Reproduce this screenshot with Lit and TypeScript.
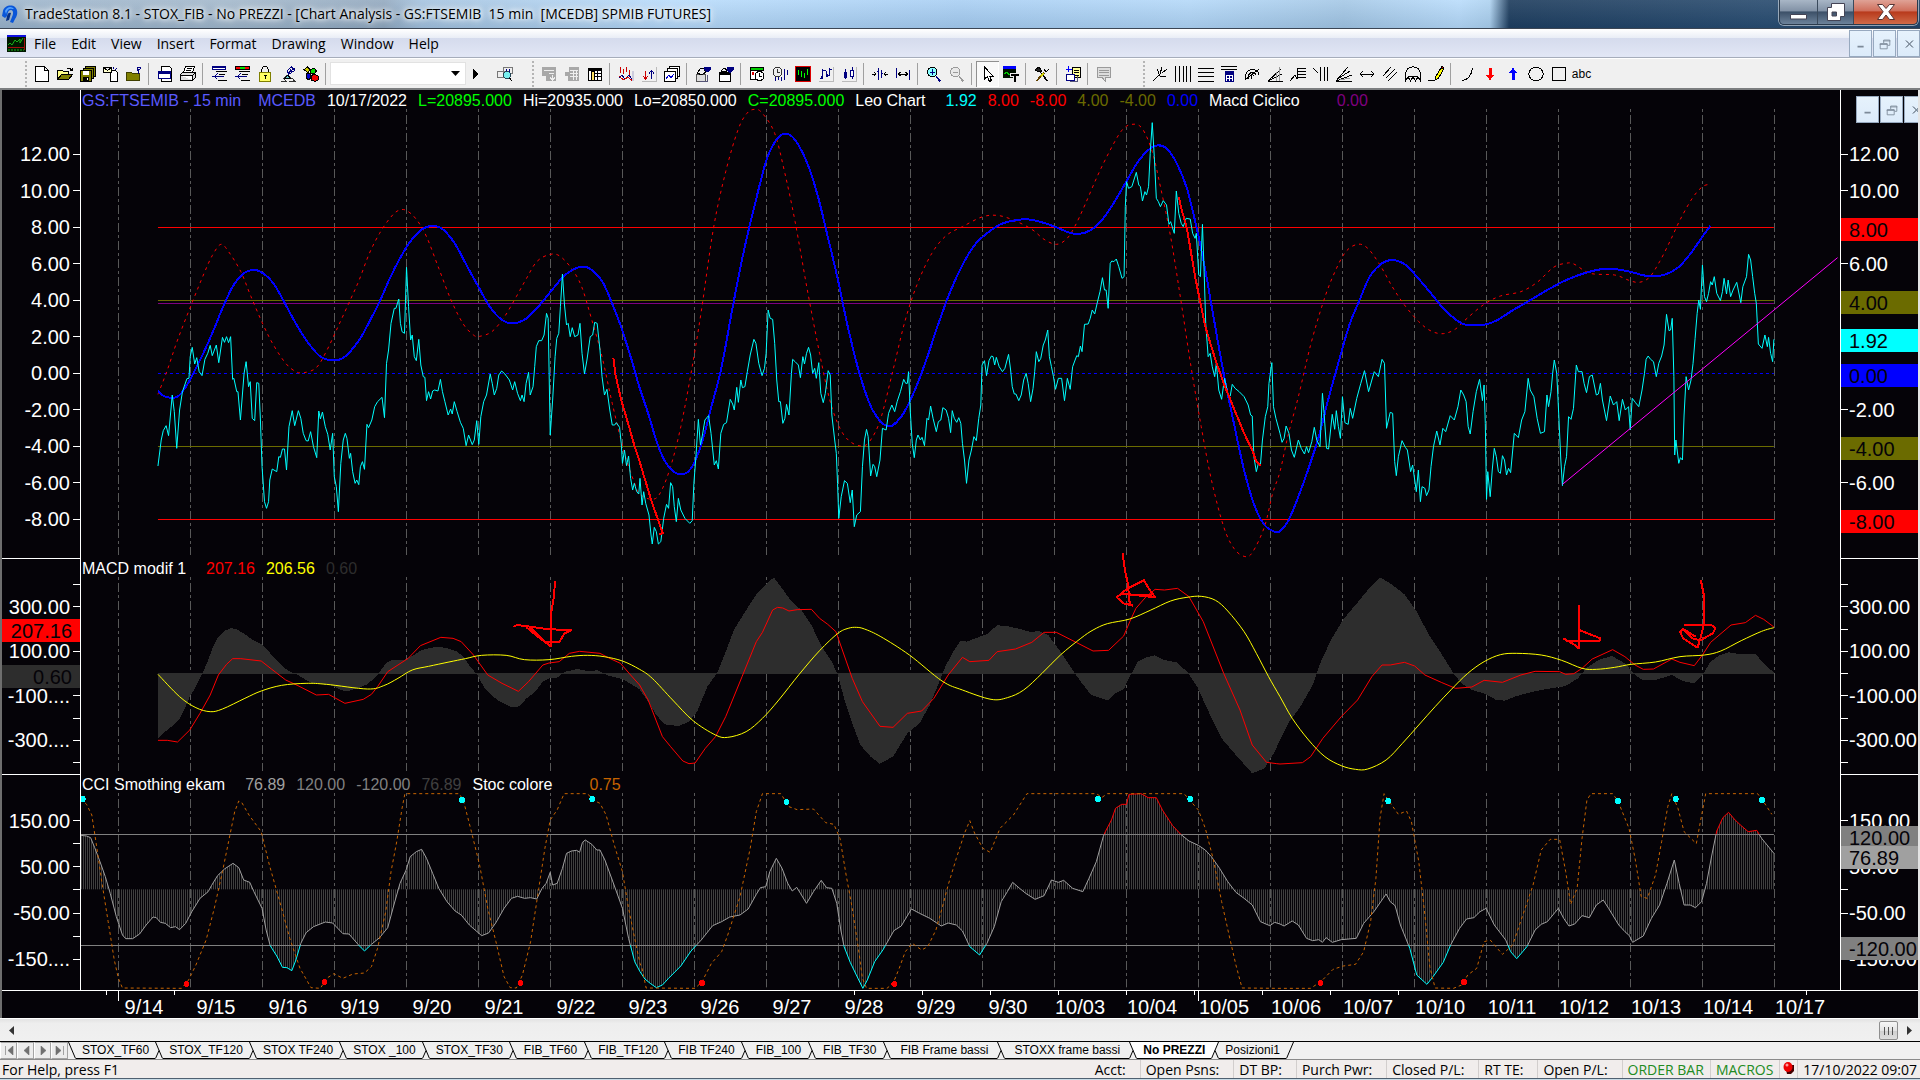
import { LitElement, html, svg, css } from "lit";
import { customElement, property } from "lit/decorators.js";
import { styleMap } from "lit/directives/style-map.js";

type Pt = [number, number];
type Stroke = [fill: string, stroke: string, d: string];

/* Chart space: 2.45 units per screen pixel across, 3 down, in three columns of 1568 units. */
const COLUMN = 1568;
const parse = (columns: string[]): Pt[] =>
  columns.flatMap((text, i) =>
    text.trim().split(/\s+/).map((pair) => {
      const [x, y] = pair.split(",").map(Number);
      return [x + i * COLUMN, y] as Pt;
    })
  );

const poly = (p: Pt[]) => "M" + p.map(([x, y]) => `${x} ${y}`).join("L");

const smooth = (p: Pt[]) => {
  let d = `M${p[0][0]} ${p[0][1]}`;
  for (let i = 0; i < p.length - 1; i++) {
    const a = p[Math.max(i - 1, 0)], b = p[i], c = p[i + 1], e = p[Math.min(i + 2, p.length - 1)];
    d += `C${b[0] + (c[0] - a[0]) / 6} ${b[1] + (c[1] - a[1]) / 6} ${c[0] - (e[0] - b[0]) / 6} ${c[1] - (e[1] - b[1]) / 6} ${c[0]} ${c[1]}`;
  }
  return d;
};

const bars = (p: Pt[], zero: number, from: number, step: number) => {
  let d = "";
  let k = 0;
  for (let x = from; x <= p[p.length - 1][0]; x += step) {
    while (k < p.length - 2 && p[k + 1][0] < x) k++;
    const [a, b] = [p[k], p[k + 1]];
    const y = a[1] + ((b[1] - a[1]) * (x - a[0])) / (b[0] - a[0]);
    d += `M${x.toFixed(2)} ${zero}V${y.toFixed(1)}`;
  }
  return d;
};

const cycle = parse([
  `387,903 405,920 435,920 458,885 480,835 500,785 525,715 545,655 570,590 595,552 622,540 645,550 670,580 695,633 720,690 750,750 785,800 818,811 845,800 880,750 905,695 930,635 955,565 980,505 1005,455 1035,417 1060,408 1085,418 1115,462 1145,530 1172,590 1200,650 1230,690 1258,700 1290,685 1320,648 1349,605 1380,560 1405,538 1430,530 1450,540 1475,573 1498,635 1520,705 1545,800 1567,893`,
  `20,970 45,1070 70,1130 100,1153 125,1135 150,1065 175,950 200,830 228,645 255,480 280,350 310,210 335,148 357,131 380,150 410,220 435,315 460,440 485,570 510,715 540,860 570,960 607,1009 640,980 670,910 700,815 730,705 760,605 790,525 820,465 850,430 885,402 920,391 950,388 985,397 1020,412 1050,427 1075,432 1105,420 1130,393 1160,340 1190,278 1220,215 1250,175 1270,166 1290,175 1315,220 1340,295 1365,420 1385,540 1405,680 1430,850 1455,1000 1480,1140 1505,1245 1530,1305 1555,1325`,
  `0,1323 20,1293 45,1220 70,1135 95,1040 120,920 145,810 170,705 195,630 220,560 250,520 278,510 310,527 340,567 370,610 400,655 430,688 455,704 500,704 530,692 570,661 610,633 655,600 700,571 750,548 800,536 850,543 900,558 940,555 975,533 1005,492 1035,440 1054,408`,
]);

const lead = parse([
  `387,913 410,840 435,750 470,640 500,550 520,497 541,463 560,485 590,545 615,620 645,705 670,765 700,820 725,845 745,848 775,833 800,783 830,705 860,625 880,570 905,490 930,430 955,385 975,362 995,361 1020,388 1045,440 1075,535 1105,630 1135,702 1160,735 1175,739 1205,725 1235,682 1265,620 1290,565 1315,515 1345,494 1370,497 1400,535 1425,590 1450,690 1475,800 1500,940 1530,1090 1555,1180`,
  `0,1213 30,1228 50,1208 75,1130 100,1010 125,850 150,665 180,415 210,245 240,120 262,70 282,58 300,70 330,130 355,250 380,395 410,600 440,790 465,930 490,1015 515,1055 545,1068 565,1050 590,985 620,840 650,690 680,580 715,490 750,437 790,410 840,380 880,377 920,393 960,418 990,448 1020,463 1045,447 1065,410 1090,345 1120,260 1150,185 1180,122 1205,103 1230,115 1255,185 1275,290 1300,440 1325,630 1350,830 1375,1010 1400,1170 1430,1310 1455,1375 1480,1399 1500,1388 1530,1310 1550,1210`,
  `0,1145 20,1035 45,920 75,765 105,640 130,558 160,487 190,463 215,475 245,525 275,590 305,645 340,695 370,723 400,731 430,717 460,683 500,643 540,618 590,605 630,577 670,532 700,520 720,522 760,550 820,555 855,571 880,577 905,562 930,515 955,455 980,390 1010,325 1035,290 1054,283`,
]);

const price = parse([
  `387,1128 395,1050 400,1022 407,1007 413,1037 422,915 427,965 433,1075 440,960 447,905 458,866 463,865 466,800 471,772 477,822 482,803 488,845 495,857 502,808 509,790 515,766 520,797 530,765 536,818 545,742 550,757 555,740 560,758 565,740 570,868 573,865 580,905 583,905 589,990 598,850 603,815 609,890 613,875 618,985 624,992 629,878 634,880 638,990 642,1130 648,1235 653,1255 658,1235 661,1170 667,1137 678,1145 683,1100 687,1102 692,1077 697,1077 702,1140 708,1010 716,962 722,1007 731,962 737,985 743,1030 750,1052 755,1053 761,1025 768,1070 776,1103 781,963 785,987 790,966 797,1010 803,1033 809,1080 815,1030 819,1160 824,1190 829,1265 835,1120 841,1050 846,1030 850,1045 856,1105 859,1090 864,1145 870,1180 874,1170 879,1184 883,1130 888,1115 893,1138 899,1003 903,1013 911,990 918,950 925,935 936,922 942,983 947,820 952,780 958,700 966,655 970,655 977,627 981,700 985,725 991,730 996,532 1001,650 1006,750 1010,735 1015,800 1020,812 1026,748 1031,825 1037,860 1041,862 1045,932 1050,905 1055,927 1060,903 1065,900 1073,903 1079,868 1084,905 1090,935 1098,975 1104,957 1108,972 1113,935 1120,965 1128,997 1135,1015 1142,1067 1148,1035 1157,1064 1162,1050 1168,992 1173,1063 1178,980 1185,935 1192,915 1201,852 1206,880 1211,915 1217,895 1222,855 1229,843 1237,852 1248,870 1256,900 1261,875 1268,910 1275,932 1279,915 1284,935 1289,880 1295,847 1299,915 1306,890 1310,830 1314,770 1320,752 1327,752 1333,735 1339,670 1343,685 1348,1035 1354,930 1360,800 1364,745 1369,730 1373,650 1378,552 1383,645 1388,705 1392,700 1397,740 1402,713 1408,740 1416,735 1421,700 1426,790 1432,852 1438,810 1446,740 1452,735 1457,697 1463,700 1470,780 1475,860 1481,915 1487,898 1494,960 1500,1005 1506,1005 1510,998 1518,1012 1522,1060 1525,1120 1530,1080 1535,1127 1540,1098 1545,1165 1550,1200 1554,1180 1560,1205 1565,1212`,
  `0,1165 5,1245 9,1205 14,1240 22,1275 27,1335 30,1362 35,1312 40,1325 45,1362 51,1355 58,1285 65,1243 70,1255 75,1178 80,1190 84,1250 89,1295 94,1225 100,1260 110,1285 122,1300 128,1292 132,1180 137,1100 143,988 148,1065 153,1035 159,990 168,977 174,1030 182,1125 187,1112 192,1137 198,1030 205,1003 212,998 221,928 227,942 231,960 237,892 241,937 247,870 251,893 257,890 263,845 270,795 279,748 284,760 291,820 299,857 305,835 309,790 314,660 319,685 325,688 330,760 335,870 340,935 344,935 350,1000 355,985 359,943 365,975 371,850 374,808 380,815 388,825 393,863 399,800 403,822 408,790 413,772 418,795 423,850 428,835 432,865 438,818 443,910 449,938 454,910 461,842 466,855 470,975 477,1050 481,1090 484,1180 487,1285 493,1220 501,1172 508,1180 515,1238 520,1200 525,1310 531,1275 540,1265 545,1130 550,1050 555,1018 559,1040 565,1158 571,1123 575,1130 580,1160 588,1110 594,1015 603,1020 609,970 617,945 624,965 630,935 638,905 646,868 651,880 655,880 658,845 662,960 667,1060 672,1103 677,1050 681,1035 687,1050 691,1042 697,1067 703,985 707,990 712,948 718,985 726,1025 731,995 737,990 742,953 750,960 756,985 761,1028 765,962 770,985 776,997 781,983 786,1000 790,1060 795,1110 800,1180 806,1110 812,1080 818,1040 824,1052 830,985 835,945 838,825 844,812 849,857 855,812 861,798 865,800 869,825 873,802 880,830 888,845 894,835 903,793 908,840 912,890 917,912 921,912 928,932 934,915 940,870 946,850 951,880 957,935 963,895 967,845 971,785 977,815 982,805 988,765 993,750 999,720 1003,800 1008,830 1013,860 1018,898 1025,865 1033,865 1040,932 1047,865 1054,898 1060,830 1070,797 1074,800 1079,768 1083,785 1089,703 1098,702 1103,685 1108,660 1114,672 1120,640 1127,605 1133,563 1138,600 1142,600 1147,655 1152,520 1156,513 1161,515 1167,507 1173,530 1181,565 1186,560 1189,350 1192,275 1197,295 1205,290 1216,247 1222,285 1226,290 1231,333 1237,305 1241,315 1246,290 1250,190 1255,98 1260,200 1265,325 1270,335 1275,350 1282,332 1290,345 1296,403 1300,395 1309,430 1314,303 1320,370 1326,400 1331,410 1338,385 1348,387 1354,430 1360,445 1363,430 1369,555 1373,560 1378,403 1382,540 1386,700 1392,800 1397,790 1402,830 1408,860 1412,820 1418,900 1425,928 1432,865 1442,920 1446,918 1451,883 1458,895 1468,905 1480,920 1490,945 1496,975 1500,978 1504,1100 1510,1145 1515,1120 1520,1125 1525,1050 1532,980 1538,950 1541,880 1548,818 1552,950 1558,985`,
  `0,1030 5,1057 10,1045 15,1008 22,1030 28,1080 35,1102 45,1050 52,1075 60,1092 65,1070 70,1088 78,1055 84,1012 90,1050 98,1070 104,910 108,970 114,1075 119,1077 128,973 134,1018 138,962 143,1010 148,1045 153,920 159,998 167,1003 172,955 178,985 188,925 198,880 207,842 217,905 225,870 231,845 241,860 250,808 256,820 261,1015 270,967 276,970 281,1115 285,1157 290,1100 299,1052 307,1072 312,1080 320,1145 325,1125 334,1205 339,1140 344,1235 348,1190 355,1195 359,1217 365,1200 370,1130 376,1070 384,1023 392,1065 399,1015 406,1025 417,977 427,990 436,950 443,900 450,915 456,935 461,1010 466,1032 473,965 481,905 489,868 496,932 500,885 503,1000 506,1228 509,1145 515,1220 520,1140 525,1075 530,1100 535,1145 540,1150 545,1097 550,1110 555,1155 560,1135 565,1148 574,1030 584,1043 592,990 600,965 608,865 613,900 622,920 630,985 638,1030 648,1025 654,915 658,950 664,905 668,850 672,810 678,850 683,975 688,1110 692,1187 697,1130 702,1100 707,980 713,988 719,955 726,825 731,845 740,845 745,880 751,908 758,860 765,855 770,885 775,915 780,912 785,880 790,930 800,992 809,918 817,945 825,935 831,992 839,928 846,960 854,950 858,1020 863,925 871,938 879,950 887,900 893,850 897,808 902,798 908,808 915,815 922,860 928,820 935,798 941,765 947,673 953,722 957,720 961,685 965,860 967,1095 970,1050 977,1120 981,1103 986,1110 990,975 995,860 1001,900 1007,870 1012,820 1017,745 1022,670 1026,630 1030,658 1035,525 1040,620 1045,635 1050,610 1055,575 1059,585 1064,560 1070,610 1079,632 1084,605 1088,565 1094,612 1098,570 1104,620 1110,600 1119,577 1129,638 1134,590 1143,560 1148,493 1153,510 1158,560 1163,610 1167,640 1172,762 1181,775 1188,735 1194,770 1197,742 1202,790 1207,815 1210,748`,
]);

const macdHist = parse([
  `387,552 400,535 420,515 437,497 450,468 465,425 480,395 495,358 510,315 522,275 535,245 550,228 565,219 580,223 600,238 620,255 642,268 660,292 680,318 700,342 715,352 730,360 760,382 790,388 815,392 835,405 850,409 880,398 900,388 918,368 930,352 945,325 960,316 990,315 1010,303 1030,287 1055,278 1080,276 1100,281 1120,290 1135,305 1150,332 1170,360 1185,395 1205,422 1225,440 1255,457 1272,454 1290,430 1310,412 1330,380 1345,370 1365,368 1385,350 1415,342 1440,348 1465,346 1490,362 1525,372 1567,403`,
  `20,440 40,480 60,508 95,513 120,500 140,470 165,395 190,352 210,290 230,225 255,175 285,118 305,92 328,67 345,95 370,138 395,165 420,210 445,275 470,320 485,360 500,430 520,505 540,570 565,605 587,626 620,605 655,535 685,505 710,450 730,390 750,330 770,285 785,257 800,260 850,237 875,211 900,213 940,225 960,232 975,227 1000,240 1030,290 1060,345 1080,380 1105,420 1147,437 1165,415 1185,403 1200,365 1220,320 1240,307 1262,301 1285,315 1315,322 1340,350 1365,395 1395,475 1425,550 1460,600 1500,655 1530,640 1555,590`,
  `0,555 20,505 50,455 80,390 100,320 125,255 155,193 185,150 215,105 245,67 270,85 305,118 335,170 365,240 400,305 425,355 445,385 470,405 500,415 530,435 550,437 580,423 620,410 650,403 700,393 730,370 750,340 780,315 813,303 845,325 870,360 890,376 920,375 960,360 985,377 1015,386 1035,360 1055,320 1075,302 1100,292 1130,298 1165,297 1185,325 1210,353`,
]);

const macdFast = parse([
  `387,556 410,556 435,561 465,525 490,475 515,420 535,360 555,328 570,311 590,311 640,318 665,342 700,375 730,392 775,420 805,418 845,445 890,433 910,418 925,395 950,350 975,330 1000,310 1030,272 1080,247 1110,250 1130,260 1160,300 1195,360 1230,385 1270,409 1295,380 1330,330 1345,324 1370,320 1395,295 1420,289 1470,295 1490,308 1520,325 1545,360 1567,390`,
  `20,435 55,545 75,575 105,618 120,626 135,624 160,580 185,545 210,485 250,365 285,260 300,232 325,165 337,157 350,159 365,168 385,164 420,163 440,190 460,208 480,230 500,300 520,370 545,440 588,514 620,517 655,475 690,468 720,430 755,360 790,307 808,320 855,316 875,290 920,282 960,262 990,232 1020,232 1070,263 1110,288 1148,286 1185,243 1200,200 1215,160 1240,125 1262,103 1285,105 1317,100 1345,125 1380,200 1430,355 1470,465 1500,570 1535,622 1560,626`,
  `0,627 55,623 75,605 105,550 150,485 190,435 225,365 250,330 270,330 305,322 330,333 355,360 395,382 430,400 470,396 500,376 545,382 590,360 625,349 685,350 700,358 720,356 740,340 765,312 815,284 845,305 870,330 890,343 915,342 960,312 980,322 1015,332 1035,300 1055,262 1105,210 1140,203 1165,181 1185,193 1210,216`,
]);

const macdSlow = parse([
  `387,358 440,425 480,458 515,470 545,462 600,430 640,408 690,391 750,385 800,388 900,402 940,392 975,370 1010,345 1050,334 1100,321 1140,311 1180,301 1240,301 1285,314 1345,314 1400,304 1440,301 1480,305 1525,318 1567,343`,
  `30,370 80,435 130,497 185,540 215,547 260,530 300,490 340,435 390,358 440,287 485,235 510,220 530,217 550,222 590,245 660,300 740,378 790,405 860,433 900,428 940,405 985,355 1030,300 1080,250 1110,225 1145,206 1200,192 1250,166 1300,138 1340,127 1375,124 1410,136 1440,168 1480,230 1510,295 1540,365`,
  `0,425 30,490 70,555 110,605 150,632 185,643 215,642 260,615 300,565 340,510 380,455 420,403 460,355 500,320 540,299 580,295 640,300 690,316 740,340 775,343 820,337 860,328 920,321 980,305 1040,300 1080,288 1130,257 1180,229 1210,218`,
]);

const cci = parse([
  `198,841 212,843 222,848 232,878 245,920 258,965 270,1015 285,1085 300,1140 308,1151 325,1151 342,1137 358,1110 375,1086 383,1088 393,1102 405,1105 418,1118 430,1115 440,1124 455,1105 470,1070 490,1030 510,1010 518,992 533,962 550,942 571,925 585,938 597,975 612,982 622,1010 642,1060 652,1125 662,1172 678,1203 692,1237 703,1238 715,1247 725,1215 737,1165 750,1133 768,1115 797,1101 815,1104 840,1136 855,1137 880,1172 893,1188 910,1168 930,1148 950,1118 965,1050 980,985 995,945 1005,905 1020,890 1033,883 1045,910 1060,955 1075,1000 1095,1040 1115,1068 1130,1080 1150,1110 1180,1142 1197,1134 1215,1103 1235,1060 1253,1030 1268,1024 1285,1030 1300,1028 1315,1032 1328,1000 1338,985 1348,952 1354,990 1365,985 1378,940 1388,895 1400,888 1413,886 1420,892 1427,862 1434,855 1450,868 1462,885 1470,885 1482,915 1500,975 1525,1060 1540,1150 1555,1220`,
  `0,1250 12,1272 25,1285 40,1298 55,1290 70,1270 100,1233 125,1188 150,1155 178,1112 200,1100 220,1086 245,1080 265,1062 285,1018 295,998 308,995 318,950 334,910 348,940 362,985 373,1008 384,997 393,1015 408,1045 425,1010 444,976 457,998 470,1000 482,1045 492,1125 500,1175 515,1222 530,1260 546,1300 557,1275 575,1220 595,1185 622,1127 640,1113 665,1062 685,1075 710,1090 738,1113 755,1104 775,1110 790,1128 808,1175 832,1200 850,1165 868,1115 885,1040 900,1010 913,982 930,1000 945,1015 968,1033 990,1022 1008,975 1025,982 1038,976 1060,1000 1085,1010 1100,970 1118,920 1135,845 1140,830 1155,795 1165,760 1180,748 1192,748 1198,718 1228,716 1245,728 1265,728 1280,765 1305,812 1325,838 1345,858 1368,871 1385,885 1400,905 1420,940 1440,980 1460,1012 1480,1030 1500,1050 1520,1100 1543,1112 1555,1102`,
  `0,1107 10,1113 30,1098 45,1110 65,1150 80,1157 95,1154 104,1162 113,1148 128,1162 150,1154 187,1150 205,1105 230,1070 260,1017 270,1040 282,1052 295,1110 318,1180 335,1260 360,1288 375,1265 400,1222 418,1170 440,1120 457,1092 475,1088 490,1070 505,1060 525,1110 553,1155 565,1190 580,1211 605,1175 625,1125 640,1108 655,1100 682,1060 695,1090 708,1113 722,1107 740,1082 758,1088 775,1050 792,1035 805,1060 830,1110 845,1130 856,1142 864,1162 890,1143 910,1090 930,1050 948,985 966,915 978,985 990,1050 1005,1050 1018,1058 1033,1040 1045,985 1058,900 1070,828 1085,788 1099,772 1115,795 1130,812 1147,830 1168,826 1180,850 1210,895`,
]);

const stoch = parse([
  `198,732 212,748 225,780 235,860 250,985 265,1100 280,1215 290,1270 300,1299 445,1300 462,1275 480,1230 505,1155 525,1060 545,950 560,860 575,770 585,738 592,742 610,780 640,830 660,930 690,1060 710,1150 735,1240 762,1298 785,1300 800,1270 818,1256 840,1270 865,1257 893,1254 910,1235 925,1180 945,1070 958,950 972,860 985,760 992,716 1125,716 1135,735 1155,830 1175,930 1195,1060 1215,1160 1235,1265 1250,1298 1265,1299 1280,1260 1300,1160 1320,1000 1335,880 1348,795 1365,765 1382,716 1440,716 1452,735 1470,745 1485,780 1505,870 1525,950 1540,1060 1560,1180`,
  `0,1225 5,1240 15,1299 135,1300 152,1280 175,1225 200,1190 215,1140 245,1025 270,880 285,770 300,716 345,716 365,755 385,764 425,762 455,803 475,808 490,850 505,960 520,1060 535,1180 545,1270 555,1300 605,1300 620,1285 635,1240 650,1190 667,1165 690,1185 705,1175 725,1125 740,1060 755,990 775,910 795,835 808,797 820,835 840,880 858,892 882,820 915,780 948,716 1118,716 1132,727 1145,716 1333,716 1350,740 1368,765 1385,820 1405,915 1425,1040 1445,1150 1460,1230 1475,1299 1560,1300`,
  `0,1300 75,1300 100,1280 130,1243 155,1233 185,1228 205,1190 222,1100 235,970 245,790 255,716 265,735 290,778 310,768 322,800 340,920 355,1080 367,1235 380,1299 425,1300 445,1290 460,1260 482,1240 500,1160 515,1155 545,1198 570,1170 595,1080 620,990 640,885 662,853 685,853 700,950 712,1048 728,1000 740,850 752,735 762,716 815,716 828,738 855,820 870,910 885,1025 900,1030 920,960 935,860 950,755 960,716 975,760 990,830 1020,866 1030,800 1043,716 1170,716 1182,735 1205,778`,
]);

const highDots: Pt[] = [[203, 732], [1132, 735], [1451, 732], [1927, 741], [2690, 732], [2916, 732], [3401, 738], [3964, 738], [4106, 732], [4317, 735]];
const lowDots: Pt[] = [[457, 1287], [795, 1281], [1275, 1284], [1720, 1284], [2191, 1287], [3235, 1284], [3587, 1281]];

const PLOT_X = 198.45;
const PLOT_W = 4309.55;
const DAY_X = 290.33;
const DAY_W = 176.4;
const DATES = ["9/14", "9/15", "9/16", "9/19", "9/20", "9/21", "9/22", "9/23", "9/26", "9/27", "9/28", "9/29", "9/30", "10/03", "10/04", "10/05", "10/06", "10/07", "10/10", "10/11", "10/12", "10/13", "10/14", "10/17"];

const dayLines = (y0: number, y1: number) =>
  svg`<path class="day" d=${DATES.map((_, i) => `M${(DAY_X + i * DAY_W).toFixed(2)} ${y0}V${y1}`).join("")}></path>`;

const line = (color: string, d: string, width = 1, dash = "") =>
  svg`<path class="ln" stroke=${color} stroke-width=${width} stroke-dasharray=${dash || "none"} d=${d}></path>`;

const level = (color: string, y: number, x0 = 387, dash = "") => line(color, `M${x0} ${y}H4346`, 1, dash);

const mainPlot = svg`
  ${dayLines(57, 1395)}
  ${level("#ff0000", 412.5)}${level("#ff0000", 1288.5)}
  ${level("#6b6b00", 631.5)}${level("#6b6b00", 1069.5)}${level("#800080", 640.5)}
  ${level("#0000ff", 850.5, 387, "3 3")}
  ${line("#ff0000", smooth(lead), 1, "3 4")}
  ${line("#0000ff", smooth(cycle), 2)}
  ${line("#00ffff", poly(price))}
  ${line("#ff00ff", "M3828 1183L4502 503")}
  ${line("#ff0000", "M1503 805L1508 855L1522 930L1540 1005L1555 1070L1568 1118L1578 1160L1598 1240L1624 1330L1614 1332", 2)}
  ${line("#ff0000", "M2888 320L2894 355L2908 415L2928 560L2953 710L2978 810L2998 880L3018 940L3048 1030L3068 1080L3078 1115L3089 1128", 2)}
  ${line("#ff0000", "M2751 1390V1404", 2)}`;

const macdPlot = svg`
  ${dayLines(66, 648)}
  <path fill="#2d2d2d" d="${poly(macdHist)}V356H387Z"></path>
  ${line("#2d2d2d", "M387 355.5H4346")}
  ${line("#ff0000", poly(macdFast))}
  ${line("#ffff00", smooth(macdSlow))}
  ${line("#ff0000", "M1360 78L1357 125L1350 175V275M1258 215L1268 210L1340 222L1400 226L1383 235L1370 262H1335M1290 217L1318 245L1352 276M1300 217L1335 262", 2)}
  ${line("#ff0000", "M2751 0L2756 45L2763 85L2766 120L2768 150M2776 152L2753 145L2736 127L2763 100L2803 76L2813 98L2830 127L2753 116M2746 118L2823 120", 2)}
  ${line("#ff0000", "M3868 150V280L3856 268L3830 250M3871 226L3896 238L3921 250L3919 258H3836", 2)}
  ${line("#ff0000", "M4167 75L4174 118V210L4166 250L4159 278M4126 210L4194 211L4203 220L4196 235L4166 256L4146 250L4124 222L4116 230L4124 250L4158 278M4124 222L4154 245", 2)}`;

const cciPath = poly(cci);
const cciPlot = svg`
  <defs>
    <clipPath id="over"><rect x="0" y="657" width="4704" height="181"></rect></clipPath>
    <clipPath id="mid"><rect x="0" y="838" width="4704" height="333"></rect></clipPath>
    <clipPath id="under"><rect x="0" y="1171" width="4704" height="140"></rect></clipPath>
  </defs>
  ${dayLines(714, 1297)}
  ${line("#404040", bars(cci, 1003, PLOT_X + 1.22, 4.9))}
  ${level("#808080", 838.5, 197)}${level("#808080", 1171.5, 197)}
  <g clip-path="url(#mid)">${line("#a0a0a0", cciPath)}</g>
  <g clip-path="url(#over)">${line("#ff0000", cciPath)}</g>
  <g clip-path="url(#under)">${line("#00ffff", cciPath)}</g>
  ${line("#c86400", poly(stoch), 1, "3 3")}
  ${highDots.map(([x, y]) => svg`<ellipse fill="#00ffff" cx=${x} cy=${y} rx="7" ry="9"></ellipse>`)}
  ${lowDots.map(([x, y]) => svg`<ellipse fill="#ff0000" cx=${x} cy=${y} rx="7" ry="9"></ellipse>`)}`;

/* Toolbar glyphs on a 16 by 16 grid. */
const N = "none", K = "#000", B = "#000080", G = "#9a9a9a";
const ICONS: Record<string, Stroke[]> = {
  new: [["#fff", K, "M1.5 .5H10.5L14.5 4.5V15.5H1.5ZM10.5 .5V4.5H14.5"]],
  open: [["#ff8", K, "M.5 13.5V4.5H5.5L6.5 5.5H11.5V8.5H4.5L.5 13.5"], ["#808000", K, "M.5 13.5L4.5 8.5H15.5L11.5 13.5Z"], [N, K, "M9.5 3.5C11 1.5 13 1.5 14.5 4M15.5 1.5V4.5H12.5"]],
  saveall: [["#808000", K, "M5.5 .5H15.5V10.5H5.5Z"], ["#808000", K, "M3.5 2.5H13.5V12.5H3.5Z"], ["#808000", K, "M.5 4.5H11.5V15.5H.5Z"], ["#fff", N, "M3 5H9V9H3Z"], [K, N, "M3 11H9V15H3Z"], ["#fff", N, "M7 12H8V14H7Z"]],
  maildoc: [["#fff", K, "M7.5 4.5H12.5L14.5 6.5V15.5H7.5Z"], ["#ffc", K, "M.5 1.5H8.5V6.5H.5ZM.5 1.5L4.5 4.5L8.5 1.5"], [N, B, "M10.5 3V1M12.5 4L14 2"]],
  folder: [["#808000", "#404000", "M.5 14.5V6.5H5.5L6.5 7.5H13.5V14.5Z"], [N, B, "M12.5 7.5V4L15.5 1.5M11.5 4.5V1.500H14.500"]],
  windoc: [["#fff", K, "M4.5 .5H12.5L14.5 2.5V15.5H4.5Z"], ["#fff", B, "M1.5 5.5H13.5V12.5H1.5Z"], [B, B, "M1.5 5.5H13.5V7.5H1.5Z"]],
  print: [["#fff", K, "M5.5 .5H14.5L12.5 6.5H3.5ZM7 2.5H12M6 4.5H11"], ["#ddd", K, "M2.5 6.5H15.5V11.5L12.5 14.5H.5V8.5Z"], ["#fff", K, "M.5 9.5H12.5V14M12.5 9.5L15.5 7"]],
  back1: [[B, B, "M1.5 .5H14.5V3.5H1.5Z"], [N, "#fff", "M2 2H14"], [N, K, "M4.5 5.5H15.5M8 8.5H14M7 14.5H15.5"], [N, B, "M3.5 10.5H13M6.500 7.500L3.500 10.500L6.500 13.500M.5 10.500H3"]],
  back2: [[K, K, "M1.5 .5H15.5V3.5H1.5Z"], ["#f00", N, "M2 1H6V3H2Z"], ["#0d0", N, "M6 1H11V3H6Z"], ["#f00", N, "M11 1H15V3H11Z"], [N, K, "M4.5 5.5H15.5M8 8.5H14M7 14.5H15.5"], [N, B, "M3.5 10.5H13M6.500 7.500L3.500 10.500L6.500 13.500M.5 10.500H3"]],
  lock: [[N, K, "M4.5 7V3.5L6.500 .5H9.500L11.500 3.500V7"], ["#ff6", "#808000", "M2.5 6.5H13.5V15.5H2.5Z"], [K, K, "M6.5 9.5H9.5M8 10V13"]],
  dish: [[N, "#333", "M1 15.500H6L3.500 12M9 15.500H15L12 12M3 13L7 9.500L12 13"], ["#6cc", K, "M5 12L8 9L10 12Z"], [N, B, "M8 7L15 2M9 8L14 5M7 5L12 .5M7 5L9 9M10 3L12 6M12 1L15 5"]],
  balls: [["#cc0", K, "M1 3.5L4.5 1L7 3.5L5 7Z"], ["#0d0", K, "M7 4L11 2L13.5 5L11 8L8 7Z"], ["#00c", K, "M3 7L7 7L8 11L6 14L3 12Z"], ["#e00", K, "M8 10L11 8L15 10V14L12 15.5L8 14Z"]],
  play: [[K, N, "M5 2.5L10.500 8L5 13.5Z"]],
  find: [["#eee", "#777", "M.5 5.5H9.5V11.5H.5ZM6.5 1.5H15.5V7.5H6.5Z"], [N, B, "M9.5 3V6M12.500 3V6"], ["#7ee", "#245", "M6.5 9A3.500 3.500 0 1 0 13.500 9A3.500 3.500 0 1 0 6.500 9"], [N, K, "M12.500 12L15.500 15.500"]],
  dis1: [["#a8a8a8", N, "M1 1H15V15H5V10H1Z"], [N, "#eee", "M3 4.5H13M8 7.5H13M11.5 9V14M9 11.5L11.5 14L14 11.5"]],
  dis2: [["#a8a8a8", N, "M5 1H15V15H4V10H1V6H5Z"], [N, "#eee", "M6 4.5H14M6 7.5H14M6 10.5H14M9.5 4V14M12.5 4V14"]],
  sheet: [["#fff", K, "M1.5 2.5H14.5V14.5H1.5Z"], [K, K, "M1.5 2.5H14.5V4.5H1.5Z"], ["#ffe060", K, "M4 5H7V14H4Z"], [N, K, "M7 7.5H14M7 10.5H14M10.5 5V14"]],
  wave: [["#ccd", N, "M14 5H16V15H14Z"], [N, "#c00", "M2.5 1V7M5.5 3V8M8.5 1V6M11.5 4V9"], [N, B, "M1 12L4 9L7 13L11 9L14 13"], [N, "#c00", "M1 10.5L6 14L10 11L14 14.5"]],
  updown: [[N, "#c00", "M4.5 5V12M2 10L4.5 13L7 10"], [N, B, "M10.5 13V5M8 7.5L10.5 4.5L13 7.5"], [N, "#bbb", "M1 15.5H15.5V1"]],
  charts: [["#fff", K, "M5.5 .5H15.5V10.5H5.5Z"], ["#fff", K, "M3.5 2.5H13.5V12.5H3.5Z"], ["#fff", K, "M.5 5.5H11.5V15.5H.5Z"], [N, "#00c", "M2 13L5 9L7 12L10 8"]],
  hand1: [["#ddd", "#555", "M1.5 8.5H10.5V15.5H1.5Z"], ["#eee", K, "M2 7L6 2L9 3L11 6L7 9Z"], [B, B, "M10 1H15V4L12 6L9 3Z"], [N, "#557", "M12 9V15H5"]],
  hand2: [["#fff", K, "M1.5 6.5H12.5V15.5H1.5Z"], [K, K, "M1.5 6.5H12.5V8H1.5Z"], ["#eee", K, "M3 5L6 2L9 4L8 6Z"], [B, B, "M9 1H15V4L12 7L9 4Z"]],
  clock1: [["#0c0", K, "M1 1.5H14V4H1Z"], ["#fff", K, "M1 4H12V13H1Z"], [N, "#d00", "M3 6L5 9M5 6L3 9"], ["#fff", K, "M6 10A4.5 4.5 0 1 0 15 10A4.5 4.5 0 1 0 6 10M10.5 7V10.5H13"]],
  clock2: [["#eee", "#333", "M1 6A4.5 4.5 0 1 0 10 6A4.5 4.5 0 1 0 1 6M5.5 3V6H8"], [N, B, "M3.5 11V15M6.5 11V14M9.5 11V15M12.5 3V14M15 4V9"]],
  blackbars: [["#000", "#d00", "M.5 .5H15.5V15.5H.5Z"], [N, "#0f0", "M3.5 4V9M6.5 5V11M9.5 7V12M12.5 3V9"]],
  notes: [[N, "#bbb", "M1 15.5H15.5V1"], [N, B, "M4.5 3V13M2 12.5H4.5M4.5 4H8M8.5 5V11M11.5 2V10M9 9.5H11.5M11.5 3H14"], [B, N, "M3 10H5V13H3ZM8 8H10V11H8Z"]],
  candles: [[N, "#bbb", "M1 15.5H15.5V1"], [B, B, "M3.5 6H5.5V11H3.5ZM4.5 3V13"], ["#fff", B, "M9.5 4H12.5V10H9.5ZM11 1V4M11 10V13"]],
  narrow: [[N, B, "M6.5 2V14M9.5 4V12M9.5 7H11M6.5 5H5"], [N, K, "M0 8H4M2 6L4 8L2 10M16 8H12M14 6L12 8L14 10"]],
  widen: [[N, B, "M1.5 2V12M14.5 4V14"], [N, K, "M3.5 8H12.5M5.5 6L3.5 8L5.5 10M10.5 6L12.5 8L10.5 10"]],
  zoomin: [["#8ff", K, "M1.5 6A4.8 4.8 0 1 0 11.1 6A4.8 4.8 0 1 0 1.5 6"], [N, B, "M3.5 6H9M6.3 3.3V8.7"], [N, B, "M10 10L15 15M10 11L14 15.5"]],
  zoomout: [["#e8e8e8", G, "M1.5 6A4.8 4.8 0 1 0 11.1 6A4.8 4.8 0 1 0 1.5 6M3.5 6H9M10 10L15 15M10 11L14 15.5"]],
  pointer: [["#fff", K, "M4.5 1V13L7.3 10.5L9.5 15.5L11.5 14.5L9.5 10H13Z"]],
  charttext: [["#001000", N, "M0 0H13V12H0Z"], ["#00f", N, "M0 0H13V3H0Z"], [N, "#0c0", "M1 8L4 6L6 9L9 7"], [K, "#eee", "M7 7H16V10H13V16H10V10H7Z"]],
  tools: [[N, "#604000", "M2 15L10 6M3 15L11 7"], ["#222", K, "M1 4L5 1L8 5L5 6Z"], [N, K, "M5 5L14 15M13 15L6 6M10 3L12 6L15 3"], ["#cc0", N, "M6 9L9 6L10 8L7 11Z"]],
  addsheet: [[N, "#00f", "M3.5 0V6M.5 3H6.5"], ["#ff9", K, "M7.5 1.5H15.5V11.5H7.5Z"], [N, K, "M9 4H14M9 6.5H14M9 9H14"], ["#fff", B, "M1.5 8.5H9.5V14.5H1.5Z"], [N, "#557", "M5 15.5H12V10"]],
  bubble: [["#ddd", G, "M1.5 1.5H14.5V11.5H9L9 15L6 11.5H1.5ZM3 4H13M3 6.5H13M3 9H13"]],
  fork: [[N, K, "M1 15L8 8M5 3L8 10L14 11M8 8L10 1M10 7L15 3"]],
  vlines: [[N, K, "M.5 0V16M4.5 0V16M8.5 0V16M11.5 0V16M15.5 0V16"]],
  hlines: [[N, K, "M0 2.5H16M0 6.5H16M0 10.5H16M0 15.5H16"]],
  calc: [[N, K, "M0 .5H16M0 3.5H16"], ["#fff", B, "M4.5 5.5H12.5V15.5H4.5Z"], [B, B, "M5 6H12V8H5ZM6 10H7V11H6ZM9 10H10V11H9ZM6 13H7V14H6ZM9 13H10V14H9Z"]],
  arcs: [[N, K, "M1 13C1 1 14 1 15 9M4 13C4 5 11 5 12 9M7 13C7 8 9 8 10 10M1 14L15 3"]],
  fan: [[N, K, "M1 15L14 3M1 15H15.5M1 15L15 8"], [N, G, "M12.5 1V15M9.5 6V15"]],
  steps: [[N, K, "M0 15L5 9L7 13V2M7 2.5H15.5M8 5.5H15.5M8 8.5H15.5M8 11.5H15.5"]],
  ylines: [[N, K, "M0 2L5 7M7.500 1V15M11.5 1V15M14.5 1V15"]],
  angle: [[N, K, "M0 15L12 1M0 15.500H16M0 15L16 9M3 12L14 5"], [N, G, "M4 14L14 12"]],
  harrow: [[N, K, "M1 8H15M4 5L1 8L4 11M12 5L15 8L12 11"]],
  channel: [[N, K, "M1 10L9 1M4 12L13 3M6 15L15 6"]],
  ghost: [[N, K, "M.5 15.5V8C1 -1.5 15 -1.5 15.5 8V15.5M.5 15L3 11L5.5 15L8 11L10.5 15L13 11L15.5 15M3 10H13"]],
  pencil: [[N, K, "M0 14.5H7"], ["#ff0", K, "M7 14L8 10L13 2L15.5 3.5L10.5 12Z"], ["#d00", K, "M13 2L14 0L16 2L15.5 3.5Z"]],
  arc: [[N, K, "M2.5 14.5C8 14.5 12.5 10 13.5 2"]],
  redarrow: [["#f00", N, "M6.5 2H9.5V9H12L8 14.5L4 9H6.5Z"]],
  bluearrow: [["#00f", N, "M6.5 14H9.5V7H12L8 1.5L4 7H6.5Z"]],
  circle: [[N, K, "M.8 8A7.2 6.7 0 1 0 15.2 8A7.2 6.7 0 1 0 .8 8"]],
  square: [[N, K, "M1.5 1.5H14.5V14.5H1.5Z"]],
};

const glyph = (parts: Stroke[], cls = "ic") => html`<svg class=${cls} viewBox="0 0 16 16" aria-hidden="true">
  ${parts.map(([f, s, d]) => svg`<path fill=${f} stroke=${s} d=${d}></path>`)}
</svg>`;

const GROUPS: string[][] = [
  ["new", "open", "saveall", "maildoc", "folder"],
  ["windoc", "print"],
  ["back1", "back2", "lock", "dish", "balls"],
];
const GROUPS_MID: string[][] = [
  ["dis1", "dis2", "sheet"],
  ["wave", "updown", "charts"],
  ["hand1", "hand2"],
  ["clock1", "clock2", "blackbars", "notes", "candles"],
  ["narrow", "widen"],
  ["zoomin", "zoomout"],
  ["pointer", "charttext"],
  ["tools"],
  ["addsheet"],
  ["bubble"],
];
const GROUPS_DRAW: string[][] = [
  ["fork", "vlines", "hlines", "calc", "arcs", "fan", "steps", "ylines", "angle", "harrow", "channel", "ghost", "pencil"],
  ["arc", "redarrow", "bluearrow", "circle", "square"],
];

const MINI: Record<string, Stroke[]> = {
  minimize: [["#7d8a99", N, "M4 10H11V12H4Z"]],
  restore: [[N, "#7d8a99", "M6.5 7V3.5H13.5V9.5H11M6 4.5H14M2.5 7.5H10.5V13.5H2.5ZM2 8.5H11"]],
  close: [[N, "#7d8a99", "M4 4L12 12M12 4L4 12M5 4L13 12M13 4L5 12"]],
};

@customElement("mdi-buttons")
export class MdiButtons extends LitElement {
  static styles = css`
    :host { display: flex; gap: 1px; }
    button { flex: none; width: 23px; height: 27px; padding: 0; border: 1px solid #97a9bf; border-radius: 0; background: linear-gradient(#e6f2fc, #dcebfa); display: grid; place-items: center; }
    svg { width: 14px; height: 14px; }
  `;
  render() {
    return Object.keys(MINI).map((k) => html`<button aria-label=${k}>${glyph(MINI[k], "g")}</button>`);
  }
}

interface Tag { text: string; at: number; bg: string }

@customElement("value-axis")
export class ValueAxis extends LitElement {
  @property() side: "left" | "right" = "left";
  @property() rows = "";
  @property({ attribute: false }) labels: (string | null)[] = [];
  @property({ attribute: false }) tags: Tag[] = [];

  static styles = css`
    :host { display: block; position: relative; overflow: hidden; font: 20px/22px "Liberation Sans", Arial, sans-serif; color: #fff; }
    .scale { display: grid; height: 100%; }
    .row { display: flex; align-items: center; min-height: 0; white-space: nowrap; }
    .left { justify-content: flex-end; gap: 3px; }
    .right { flex-direction: row-reverse; justify-content: flex-end; gap: 1px; }
    .tick { flex: none; width: 7px; height: 1px; background: #fff; }
    .tag { position: absolute; left: 0; right: 0; height: 23px; margin-top: -9px; line-height: 24px; color: #050308; white-space: nowrap; }
    .tag.left { text-align: right; padding-right: 8px; }
    .tag.right { padding-left: 8px; }
  `;
  render() {
    return html`<div class="scale" style=${styleMap({ gridTemplateRows: this.rows })}>
        <div></div>
        ${this.labels.map((t) => html`<div class="row ${this.side}">
          ${t === null ? "" : html`${t ? html`<span>${t}</span>` : ""}<i class="tick"></i>`}
        </div>`)}
      </div>
      ${this.tags.map((t) => html`<div class="tag ${this.side}" style=${styleMap({ top: `${t.at}%`, background: t.bg })}>${t.text}</div>`)}`;
  }
}

type Legend = [text: string, color: string, space?: string];

@customElement("chart-pane")
export class ChartPane extends LitElement {
  @property({ attribute: false }) legend: Legend[] = [];
  @property({ attribute: false }) plot: unknown = "";
  @property({ type: Number }) y0 = 0;
  @property({ type: Number }) span = 648;

  static styles = css`
    :host { display: grid; min-width: 0; min-height: 0; overflow: hidden; }
    .plot { grid-area: 1 / 1; width: 100%; height: 0; min-height: 100%; display: block; shape-rendering: crispEdges; }
    .legend { grid-area: 1 / 1; align-self: start; display: flex; gap: 11px; margin: 0; padding: 2px 0 0 1px; font: 16px/18px "Liberation Sans", Arial, sans-serif; white-space: nowrap; z-index: 1; }
    .near { margin-left: 6px; }
    .mid { margin-left: 9px; }
    .far { margin-left: 26px; }
    path { vector-effect: non-scaling-stroke; }
    .ln { fill: none; stroke-linejoin: round; }
    .day { fill: none; stroke: #585858; stroke-width: 1; stroke-dasharray: 9 3 3 3; stroke-dashoffset: 12; }
  `;
  render() {
    return html`
      <svg class="plot" viewBox="${PLOT_X} ${this.y0} ${PLOT_W} ${this.span}" preserveAspectRatio="none" role="img" aria-label=${this.legend[0]?.[0] ?? ""}>${this.plot}</svg>
      <div class="legend">${this.legend.map(([t, c, s]) => html`<span class=${s ?? ""} style=${styleMap({ color: c })}>${t}</span>`)}</div>`;
  }
}

const R1 = "138fr repeat(11, minmax(0, 109.5fr)) 61fr";
const R2 = "44fr repeat(9, minmax(0, 67fr)) 1fr";
const R3 = "103fr repeat(7, minmax(0, 69.5fr)) 58fr";
const pct = (y: number, y0: number, span: number) => ((y - y0) / span) * 100;

const TABS = ["STOX_TF60", "STOX_TF120", "STOX TF240", "STOX _100", "STOX_TF30", "FIB_TF60", "FIB_TF120", "FIB TF240", "FIB_100", "FIB_TF30", "FIB Frame bassi", "STOXX frame bassi", "No PREZZI", "Posizioni1"];
const TICKS = [106, 174, 854, 922, 990, 1058, 1126, 1194, 1262, 1330, 1398, 1806];

@customElement("app-root")
export class AppRoot extends LitElement {
  static styles = css`
    :host { display: grid; height: 100vh; min-height: 640px; overflow: hidden; grid-template-rows: 29px 29px 32px minmax(0, 1fr) 23px 18px 19px 2px; grid-template-columns: minmax(0, 1fr); background: #f0f0f0; color: #000; font: 14px/18px "Open Sans", "Noto Sans", sans-serif; }
    * { box-sizing: border-box; }
    button { font: inherit; color: inherit; }

    .title { display: flex; align-items: center; gap: 7px; padding-left: 2px; border-bottom: 1px solid #3c4654;
      background: linear-gradient(rgba(255,255,255,.1), rgba(30,60,90,.12)), linear-gradient(90deg, #9db5cc 0, #a3b8cb 12%, #93a9bf 20%, #a5c3df 22%, #b9dcfb 35%, #a9cff3 50%, #b4d8f8 62%, #a5c8e6 70%, #b9dcfb 76%, #aed2f0 77.6%, #1b3a5b 78.6%, #26496d 92%, #1f3f61 100%); }
    .logo { flex: none; width: 16px; height: 20px; }
    h1 { flex: 1; margin: 0; font-size: 14px; font-weight: 400; white-space: pre; text-shadow: 0 0 6px #fff, 0 0 10px #fff, 0 0 4px rgba(255,255,255,.7); }
    .win { align-self: flex-start; display: flex; height: 25px; margin-right: 2px; border: 1px solid #2a3a4c; border-top: 0; border-radius: 0 0 5px 5px; box-shadow: 0 0 0 1px rgba(255,255,255,.5); overflow: hidden; }
    .win button { padding: 0; border: 0; border-right: 1px solid #3a4a5c; display: grid; place-items: center; background: linear-gradient(#a8b6c6, #8292a6 45%, #3c5068 50%, #6c829a); }
    .win .b1 { width: 38px; }
    .win .b2 { width: 36px; }
    .win .b3 { width: 63px; border-right: 0; background: linear-gradient(#dfa296, #cf6f5c 45%, #b83a1c 50%, #d06a48); }
    .win svg { width: 20px; height: 20px; }

    .menu { display: flex; align-items: center; gap: 15px; padding: 1px 0 0 7px; background: linear-gradient(#fff, #e9edf6 32%, #d5dbed 34%, #e1e6f5 95%); border-bottom: 1px solid #a6adbb; }
    .menu .doc { flex: none; width: 19px; height: 17px; margin-right: -7px; }
    .menu button { padding: 0; border: 0; background: none; }
    .menu mdi-buttons { margin-left: auto; }

    .tools { display: flex; align-items: center; padding-left: 25px; border-top: 1px solid #fff; border-bottom: 2px solid #7c7e80; background: #f0f0f0; }
    .tools button { flex: none; width: 23px; height: 26px; padding: 0; border: 0; background: none; display: grid; place-items: center; }
    .tools .pressed { background: #f9f9f9; box-shadow: inset 1px 1px #909090, inset -1px -1px #fff; }
    .ic { width: 16px; height: 16px; shape-rendering: crispEdges; }
    .grip { flex: none; width: 2px; height: 26px; margin-right: 3px; background: repeating-linear-gradient(#b4b4b4 0 2px, transparent 2px 4px); }
    .sep { flex: none; width: 1px; height: 22px; margin: 0 4px 0 3px; background: #a0a0a0; }
    .pick { flex: none; width: 136px; height: 23px; border: 1px solid #e2e2e2; border-radius: 0; background: #fff; appearance: none; padding: 0; }
    .combo { display: grid; align-items: center; }
    .combo > * { grid-area: 1 / 1; }
    .combo svg { justify-self: end; width: 9px; height: 5px; margin-right: 6px; pointer-events: none; }
    .tools .go { width: 20px; }
    .gap-find { margin-left: 7px; }
    .gap-a { margin-left: 16px; }
    .gap-b { margin-left: 28px; }
    .abc { font: 12px/16px "Liberation Sans", Arial, sans-serif; }

    .chart { position: relative; display: grid; grid-template-columns: 79px minmax(0, 1fr) 78px; grid-template-rows: minmax(0, 468fr) minmax(0, 216fr) minmax(0, 216fr) 28px; background: #050308; border-left: 2px solid #6e6e6e; border-right: 2px solid #e4e4e4; color: #fff; }
    .axis-l { border-right: 1px solid #fff; }
    .axis-r { border-left: 1px solid #fff; }
    .split { border-top: 1px solid #fff; }
    .time { grid-column: 1 / -1; display: grid; border-top: 1px solid #fff; overflow: hidden; font: 20px/32px "Liberation Sans", Arial, sans-serif; }
    .time > * { grid-area: 1 / 1; }
    .ticks { width: 100%; height: 10px; shape-rendering: crispEdges; }
    .dates { display: grid; grid-template-columns: 106fr repeat(24, minmax(0, 72fr)) 82fr; margin: 0; padding: 0; list-style: none; text-align: center; white-space: nowrap; }
    .dates li:first-child { grid-column: 2; }
    .clip { position: absolute; top: 0; right: 0; width: 62px; height: 40px; overflow: hidden; }
    .float { padding-top: 6px; width: 71px; }

    .scroll { display: flex; align-items: center; background: linear-gradient(#e3e3e3, #eee 20%, #f0f0f0); border-top: 1px solid #fff; }
    .scroll button { flex: none; width: 22px; height: 20px; padding: 0; border: 0; background: none; display: grid; place-items: center; }
    .scroll svg { width: 5px; height: 9px; }
    .bar { flex: 1; min-width: 0; margin: 0; height: 20px; appearance: none; background: transparent; }
    .bar::-webkit-slider-thumb { appearance: none; width: 19px; height: 19px; border: 1px solid #8f8f8f; border-radius: 2px;
      background: linear-gradient(90deg, transparent 4px, #555 4px 5px, transparent 5px 8px, #555 8px 9px, transparent 9px 12px, #555 12px 13px, transparent 13px) 0 5px / 17px 8px no-repeat, linear-gradient(#f6f6f6, #e4e4e4 50%, #cfcfcf 52%, #dedede); }

    .tabs { display: flex; border-top: 1px solid #000; background: #f0f0f0; font: 12px/16px "Liberation Sans", Arial, sans-serif; }
    .tabs .nav { flex: none; width: 17px; height: 17px; padding: 0; border: 1px solid #a4a4a4; border-left-color: #fff; background: #ececec; display: grid; place-items: center; }
    .nav svg { width: 10px; height: 9px; }
    .tab { flex: none; padding: 0 6px; border: 0; border-bottom: 1px solid #000; background: #f0f0f0; white-space: pre; }
    .tab.short { padding: 0 7px; }
    .tab.wide { padding: 0 9px; }
    .tab.on { background: #fff; font-weight: 700; padding: 0 6px; }
    .slant { flex: none; width: 8px; height: 17px; }

    .status { display: flex; align-items: stretch; background: #f1edec; border-top: 1px solid #8a8a8a; font-size: 14px; line-height: 20px; white-space: nowrap; overflow: hidden; padding-right: 3px; }
    .status .help { flex: 1; padding-left: 2px; }
    .cell { padding: 0 14px 0 5px; border-left: 1px solid #d2cecd; }
    .cell.plain { border-left: 0; }
    .cell.green { color: #228b22; padding: 0 6px 0 5px; }
    .cell.lamp { padding: 1px 3px 0; }
    .cell.when { padding: 0 0 0 5px; }
    .lamp svg { width: 11px; height: 13px; display: block; }
    .edge { background: linear-gradient(#4f6070 50%, #c7dbe6 50%); }
  `;

  private group(names: string[]) {
    return names.map((n) => html`<button class=${n === "pointer" ? "pressed" : ""} aria-label=${n}>${glyph(ICONS[n])}</button>`);
  }
  private groups(list: string[][]) {
    return list.map((g, i) => html`${i ? html`<span class="sep"></span>` : ""}${this.group(g)}`);
  }
  private slant(i: number) {
    const on = TABS.indexOf("No PREZZI");
    const last = i === TABS.length;
    const afterActive = i === on + 1;
    return html`<svg class="slant" viewBox="0 0 8 17" aria-hidden="true">
      ${afterActive
        ? svg`<path fill="#fff" d="M0 0H8L0 17Z"></path><path fill="none" stroke="#000" d="M7.5 0L.5 16.5M4 8.5L7.5 16.5"></path>`
        : last
          ? svg`<path fill="none" stroke="#000" d="M7.5 0L.5 16.5"></path>`
          : svg`${i === on ? svg`<path fill="#fff" d="M0 0H8V17Z"></path>` : ""}<path fill="none" stroke="#000" d=${i === 0 ? "M.5 0L7.5 16.5" : "M.5 0L7.5 16.5M.5 16.5L4 8.5"}></path>`}
    </svg>`;
  }
  private tabClass(t: string) {
    if (t === "No PREZZI") return "tab on";
    return t.length > 12 ? "tab wide" : t.length < 9 ? "tab short" : "tab";
  }

  render() {
    const blue = "#5a5aff", w = "#ffffff", green = "#00ff00", olive = "#6b6b00";
    const l1: Legend[] = [["GS:FTSEMIB - 15 min", blue], ["MCEDB", blue, "near"], ["10/17/2022", w], ["L=20895.000", green], ["Hi=20935.000", w], ["Lo=20850.000", w], ["C=20895.000", green], ["Leo Chart", w], ["1.92", "#00ffff", "mid"], ["8.00", "#ff0000"], ["-8.00", "#ff0000"], ["4.00", olive], ["-4.00", olive], ["0.00", "#0000ff"], ["Macd Ciclico", w], ["0.00", "#800080", "far"]];
    const l2: Legend[] = [["MACD modif 1", w], ["207.16", "#ff0000", "mid"], ["206.56", "#ffff00"], ["0.60", "#2d2d2d"]];
    const l3: Legend[] = [["CCI Smothing ekam", w], ["76.89", "#a0a0a0", "mid"], ["120.00", "#808080"], ["-120.00", "#808080"], ["76.89", "#404040"], ["Stoc colore", w], ["0.75", "#c86400", "far"]];
    const p1 = (y: number) => pct(y, 0, 1404), p2 = (y: number) => pct(y, 9, 648), p3 = (y: number) => pct(y, 657, 648);
    const cells = ["Acct:", "Open Psns:", "DT BP:", "Purch Pwr:", "Closed P/L:", "RT TE:", "Open P/L:"];
    return html`
      <header class="title">
        <svg class="logo" viewBox="0 0 16 20" aria-hidden="true">
          <path fill="#0a56d8" d="M1 7C2 2 9 0 13 3C16 6 16 11 13 15L11 19L8 18L10 13C12 9 11 6 9 6C6 6 6 9 5 12L3 14L0 12Z"></path>
          <path fill="#4fa0ff" d="M3 7C5 2 10 2 12 5L10 5C7 4 5 6 4 10Z"></path>
          <path fill="#062f86" d="M5 12C6 9 7 8 9 9L7 16L4 17Z"></path>
        </svg>
        <h1>TradeStation 8.1 - STOX_FIB - No PREZZI - [Chart Analysis - GS:FTSEMIB  15 min  [MCEDB] SPMIB FUTURES]</h1>
        <div class="win">
          <button class="b1" aria-label="Minimize"><svg viewBox="0 0 20 20"><path fill="#fff" stroke="#445" d="M1.5 12.5H17.5V17H1.5Z"></path></svg></button>
          <button class="b2" aria-label="Restore"><svg viewBox="0 0 20 20"><path fill="#fff" stroke="#445" fill-rule="evenodd" d="M5.5 1.5H18.5V14.5H14.5V18.5H1.5V5.5H5.5ZM6 10V14H10.500V10Z"></path></svg></button>
          <button class="b3" aria-label="Close"><svg viewBox="0 0 20 20"><path fill="#fff" stroke="#533" d="M1.500 2.500H6.500L10 6.500L13.500 2.500H18.500L12.800 9.800L18.500 17.500H13.500L10 13L6.500 17.500H1.500L7.200 9.800Z"></path></svg></button>
        </div>
      </header>

      <nav class="menu" aria-label="Menu">
        <svg class="doc" viewBox="0 0 19 17" aria-hidden="true">
          <path fill="#001800" d="M0 0H19V17H0Z"></path><path fill="#1010e0" d="M0 0H19V2H0Z"></path>
          <path fill="none" stroke="#18b018" d="M1 10L3 8L5 10L8 5L10 7L13 4V8L16 3"></path><path fill="none" stroke="#a01010" d="M1 12.500H18M17.500 3V15"></path><path fill="none" stroke="#18b018" stroke-dasharray="2 1" d="M1 15H17"></path>
        </svg>
        ${["File", "Edit", "View", "Insert", "Format", "Drawing", "Window", "Help"].map((m) => html`<button>${m}</button>`)}
        <mdi-buttons></mdi-buttons>
      </nav>

      <div class="tools" role="toolbar" aria-label="Toolbar">
        <span class="grip"></span>
        ${this.groups(GROUPS)}
        <span class="sep"></span>
        <label class="combo"><select class="pick" aria-label="Symbol"><option></option></select>
          <svg viewBox="0 0 9 5" aria-hidden="true"><path d="M0 0H9L4.500 5Z"></path></svg></label>
        <button class="go" aria-label="Go">${glyph(ICONS.play)}</button>
        <button class="gap-find" aria-label="Find">${glyph(ICONS.find)}</button>
        <span class="grip gap-a"></span>
        ${this.groups(GROUPS_MID)}
        <span class="grip gap-b"></span>
        ${this.groups(GROUPS_DRAW)}
        <button class="abc">abc</button>
      </div>

      <main class="chart">
        <value-axis class="axis-l" side="left" .rows=${R1} .labels=${["12.00", "10.00", "8.00", "6.00", "4.00", "2.00", "0.00", "-2.00", "-4.00", "-6.00", "-8.00"]}></value-axis>
        <chart-pane .legend=${l1} .plot=${mainPlot} .y0=${0} .span=${1404}></chart-pane>
        <value-axis class="axis-r" side="right" .rows=${R1} .labels=${["12.00", "10.00", null, "6.00", null, null, null, "-2.00", null, "-6.00", null]}
          .tags=${[{ text: "8.00", at: p1(412), bg: "#ff0000" }, { text: "4.00", at: p1(631), bg: "#6b6b00" }, { text: "1.92", at: p1(745), bg: "#00ffff" }, { text: "0.00", at: p1(850), bg: "#0000ff" }, { text: "-4.00", at: p1(1069), bg: "#6b6b00" }, { text: "-8.00", at: p1(1288), bg: "#ff0000" }]}></value-axis>

        <value-axis class="axis-l split" side="left" .rows=${R2} .labels=${["", "300.00", null, "100.00", null, "-100....", "", "-300....", ""]}
          .tags=${[{ text: "207.16", at: p2(217), bg: "#ff0000" }, { text: "0.60", at: p2(355), bg: "#2d2d2d" }]}></value-axis>
        <chart-pane .legend=${l2} .plot=${macdPlot} .y0=${9}></chart-pane>
        <value-axis class="axis-r split" side="right" .rows=${R2} .labels=${["", "300.00", "", "100.00", "", "-100.00", "", "-300.00", ""]}></value-axis>

        <value-axis class="axis-l split" side="left" .rows=${R3} .labels=${["150.00", "", "50.00", "", "-50.00", "", "-150...."]}></value-axis>
        <chart-pane .legend=${l3} .plot=${cciPlot} .y0=${657}></chart-pane>
        <value-axis class="axis-r split" side="right" .rows=${R3} .labels=${["150.00", null, "50.00", "", "-50.00", null, "-150.00"]}
          .tags=${[{ text: "120.00", at: p3(838), bg: "#808080" }, { text: "76.89", at: p3(898), bg: "#a0a0a0" }, { text: "-120.00", at: p3(1171), bg: "#808080" }]}></value-axis>

        <div class="time">
          <svg class="ticks" viewBox="2 0 1916 10" preserveAspectRatio="none" aria-hidden="true">
            <path fill="none" stroke="#fff" d=${TICKS.map((x) => `M${x + 0.5} 0V4`).join("") + "M118.5 0V10M1198.5 0V10"}></path>
          </svg>
          <ol class="dates">${DATES.map((d) => html`<li>${d}</li>`)}</ol>
        </div>
        <div class="clip"><mdi-buttons class="float"></mdi-buttons></div>
      </main>

      <div class="scroll">
        <button aria-label="Scroll left"><svg viewBox="0 0 5 9"><path fill="#333" d="M5 0V9L0 4.500Z"></path></svg></button>
        <input class="bar" type="range" min="0" max="100" value="100" aria-label="Chart position">
        <button aria-label="Scroll right"><svg viewBox="0 0 5 9"><path fill="#333" d="M0 0V9L5 4.500Z"></path></svg></button>
      </div>

      <nav class="tabs" aria-label="Workspaces">
        ${["M1.5 0V9M9 0V9L4 4.500Z", "M8 0V9L3 4.500Z", "M3 0V9L8 4.500Z", "M1 0V9L6 4.500ZM8.500 0V9"].map((d, i) => html`<button class="nav" aria-label=${["First", "Previous", "Next", "Last"][i]}><svg viewBox="0 0 10 9"><path fill="#707070" stroke="#707070" stroke-width=".6" d=${d}></path></svg></button>`)}
        ${TABS.map((t, i) => html`${this.slant(i)}<button class=${this.tabClass(t)}>${t}</button>`)}${this.slant(TABS.length)}
      </nav>

      <footer class="status">
        <span class="help">For Help, press F1</span>
        ${cells.map((c, i) => html`<span class="cell ${i ? "" : "plain"}">${c}</span>`)}
        <span class="cell green">ORDER BAR</span><span class="cell green">MACROS</span>
        <span class="cell lamp"><svg viewBox="0 0 11 13" aria-hidden="true"><path fill="#400" d="M2 4H11V10L8 13H4Z"></path><ellipse cx="5" cy="6" rx="4.500" ry="5" fill="#e00"></ellipse><ellipse cx="4" cy="4" rx="1.500" ry="1.500" fill="#f99"></ellipse></svg></span>
        <span class="cell when">17/10/2022 09:07</span>
      </footer>
      <div class="edge"></div>
    `;
  }
}
